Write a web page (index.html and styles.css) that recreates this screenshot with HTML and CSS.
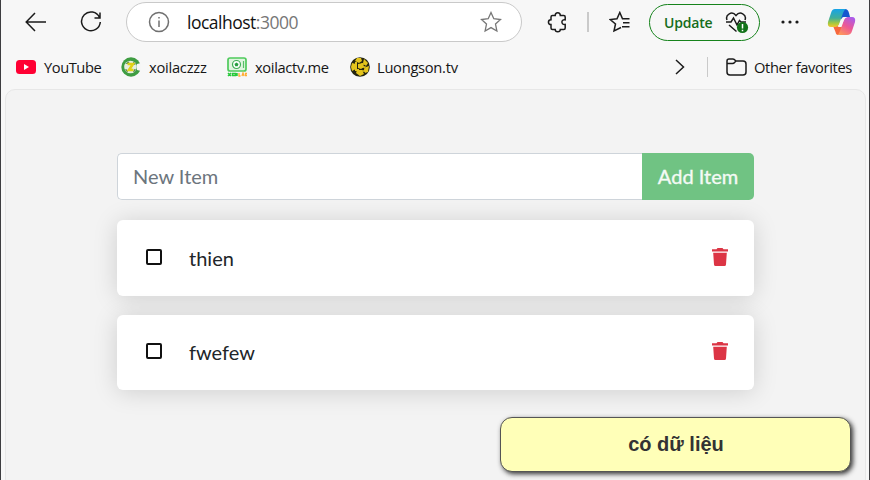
FILE: index.html
```html
<!DOCTYPE html>
<html lang="vi">
<head>
<meta charset="utf-8">
<title>Todo</title>
<link rel="stylesheet" href="styles.css">
</head>
<body>
<div class="window">
  <header class="toolbar">
    <svg class="back" width="22" height="20" viewBox="0 0 22 20"><path d="M10 1 1.200 10 10 19M1.500 10H21"/></svg>
    <svg class="reload" width="22" height="22" viewBox="0 0 22 22"><path d="M19.500 6.500A9.400 9.400 0 1 0 20.300 11M20 1.500V7H14.500"/></svg>
    <div class="address">
      <svg class="info" width="22" height="22" viewBox="0 0 22 22"><circle cx="11" cy="11" r="9.500"/><path d="M11 9.500V16M11 6V7.600"/></svg>
      <span class="url">localhost<span class="port">:3000</span></span>
      <svg class="star" width="22" height="22" viewBox="0 0 22 22"><path d="m11 1.500 2.800 6.200 6.700.8-5 4.600 1.400 6.900-5.900-3.400L5.100 20l1.400-6.900-5-4.600 6.700-.8Z"/></svg>
    </div>
    <svg class="puzzle" width="22" height="22" viewBox="0 0 22 22"><path d="M5.500 4.500H8.200C8.200.800 13.300.800 13.300 4.500H16.700Q18.200 4.500 18.200 6V8.800C13.800 8 13.800 14.200 18.200 13.500V17Q18.200 18.500 16.700 18.500H13.300C13.300 21.500 8.200 21.500 8.200 18.500H5.500Q4 18.500 4 17V13.500C.600 13.500.600 8.800 4 8.800V6Q4 4.500 5.500 4.500Z"/></svg>
    <i class="rule"></i>
    <svg class="favs" width="22" height="22" viewBox="0 0 22 22"><path d="M12 16.500 5 20 6.500 13 1.200 8.500 8 7.700 10.800 1.500 13.500 7.700H20.500M14 11.800H20.500M13 15.800H20.500"/></svg>
    <div class="update"><span>Update</span>
      <svg width="24" height="23" viewBox="0 0 24 23"><path d="M2 8C0 2.500 7-1.500 11 3.500 15-1.500 22 2.500 20 8M1 10H6L8.500 6 12 13 14.500 8.500 16 10H21M4 13 11.500 19.500"/><circle cx="17.500" cy="15.500" r="5.600"/><path class="mark" d="M17.500 12V16.500M17.500 17.800V19.200"/></svg>
    </div>
    <svg class="dots" width="18" height="6" viewBox="0 0 18 6"><circle cx="2" cy="3" r="1.600"/><circle cx="9" cy="3" r="1.600"/><circle cx="16" cy="3" r="1.600"/></svg>
    <svg class="copilot" width="29" height="28" viewBox="0 0 29 28">
      <defs>
        <linearGradient id="a" x1="0" y1="0" x2="0" y2="1"><stop offset="0" stop-color="#16a3e8"/><stop offset=".5" stop-color="#3fae9b"/><stop offset=".8" stop-color="#a9c93b"/><stop offset="1" stop-color="#f5c52f"/></linearGradient>
        <linearGradient id="b" x1=".8" y1="0" x2=".2" y2="1"><stop offset="0" stop-color="#a95cec"/><stop offset=".5" stop-color="#ed5795"/><stop offset="1" stop-color="#ff9a59"/></linearGradient>
      </defs>
      <path fill="#1457cf" d="M13 1H18Q21 1 22 5L23 9H18Q15 9 14 12Z"/>
      <path fill="#f7683d" d="M6 18H13L16 15 14 24Q13 27 11 27 9 27 8.500 24Z"/>
      <path fill="url(#a)" d="M8 1H19Q17 2 16 5L12.500 15Q11.500 19 8 19H4Q0 19 1 14L4 5Q5 1 8 1Z"/>
      <path fill="url(#b)" d="M21 9H25Q29 9 28 14L25 23Q24 27 20 27H10Q12 26 13 23L16.500 13Q17.500 9 21 9Z"/>
      <path fill="#f7f7f7" d="M17 9H20Q17.500 10 16.500 13L14.500 19H10.500Q12 18 13 15L14.500 11Q15.300 9 17 9Z"/>
    </svg>
  </header>
  <nav class="bookmarks">
    <svg class="b1" width="20" height="14" viewBox="0 0 20 14"><rect width="20" height="14" rx="3.500" fill="#ff0033"/><path fill="#fff" d="m8 4 5 3-5 3Z"/></svg>
    <span class="t1">YouTube</span>
    <svg class="b2" width="20" height="20" viewBox="0 0 20 20"><circle cx="10" cy="10" r="9.700" fill="#3f9d42"/><path fill="#f6f6f6" d="m16 7 4-1v8l-4-1Z"/><circle cx="9.500" cy="10" r="6.300" fill="#e7eee1"/><path fill="#5b8a55" d="m4.500 7 2.500-2.500 1.500.5-1.500 2Zm8-2.500 2.500 2.500-1.500 1-1.500-2ZM4 12l2 .5 1 2-1 1Zm9.500 0 1.500.5-2 3-1-1Z"/><path stroke="#e0d218" stroke-width="2.600" fill="none" d="M6.500 7H12L8 13H12.500"/></svg>
    <span class="t2">xoilaczzz</span>
    <svg class="b3" width="20" height="20" viewBox="0 0 20 20"><rect x="1" y="1" width="18" height="13" rx="2" fill="#dff5df" stroke="#4fca5c" stroke-width="1.700"/><circle cx="9.500" cy="7.500" r="4" fill="#fff" stroke="#3fae54" stroke-width="1.200"/><path fill="#259d3f" d="m9.500 5.500 2 1.500-.8 2.300H8.300L7.500 7Z"/><path d="M16.500 4V11" stroke="#59bd6a" stroke-width="1.200"/><path d="m1 16 3 3m0-3-3 3M5.500 16.500h3v2h-3ZM10 16v3" stroke="#27c93b" stroke-width="1.500" fill="none"/><path d="M12 16v3h1.500M15 19l1-3 1 3M20 16.500h-1.500v2H20" stroke="#ffad32" stroke-width="1.300" fill="none"/></svg>
    <span class="t3">xoilactv.me</span>
    <svg class="b4" width="20" height="20" viewBox="0 0 20 20"><circle cx="10" cy="10" r="9.800" fill="#252510"/><path fill="#e5c51d" d="m7 1 4 0 1 3-3 2-4-2ZM2 6l4 1 0 5-4 2-1-4ZM8 7l5-1 1 4-3 2-3-1ZM14 2l4 4-2 3-3-3ZM16 10l3-1-1 6-3 1-1-3ZM7 13l5 0 2 4-4 2-4-3Z"/><path d="M6 5v8h3" stroke="#e5c51d" fill="none" stroke-width="2"/><path d="M16 7h-4v3h3v4h-4" stroke="#e5c51d" fill="none" stroke-width="1.500"/></svg>
    <span class="t4">Luongson.tv</span>
    <svg class="chev" width="10" height="16" viewBox="0 0 10 16"><path d="m1 1 7.500 7L1 15"/></svg>
    <i class="rule"></i>
    <svg class="folder" width="21" height="18" viewBox="0 0 21 18"><path d="M1 5V3Q1 1 3 1H7Q8 1 10 3H17Q20 3 20 6V14Q20 17 17 17H4Q1 17 1 14ZM1 5.500H6.500Q8 5.500 10 3"/></svg>
    <span class="t5">Other favorites</span>
  </nav>
  <main class="page">
    <form class="add"><input type="text" placeholder="New Item"><button type="button">Add Item</button></form>
    <div class="item"><span class="box"></span><span class="name">thien</span><svg class="trash" width="16" height="18" viewBox="0 0 16 18"><path d="M0 1.200H4.500L5.500 0H10.500L11.500 1.200H16V3.400H0ZM1.200 4.800H14.800L14 16.500Q13.900 18 12.500 18H3.500Q2.100 18 2 16.500Z"/></svg></div>
    <div class="item second"><span class="box"></span><span class="name">fwefew</span><svg class="trash" width="16" height="18" viewBox="0 0 16 18"><path d="M0 1.200H4.500L5.500 0H10.500L11.500 1.200H16V3.400H0ZM1.200 4.800H14.800L14 16.500Q13.900 18 12.500 18H3.500Q2.100 18 2 16.500Z"/></svg></div>
  </main>
</div>
<div class="note">có dữ liệu</div>
</body>
</html>
```
FILE: styles.css
```css
* { box-sizing: border-box; }
body { margin: 0; width: 870px; height: 480px; overflow: hidden; background: #3d3d40; font-family: "Open Sans", sans-serif; }
.window { width: 868px; height: 480px; margin-left: 1px; background: #f7f7f7; overflow: hidden; }
svg { display: block; flex: none; fill: none; stroke: #1b1b1b; stroke-width: 1.5; }
span { white-space: nowrap; }
.toolbar { display: flex; align-items: center; height: 44px; }
.back { margin-left: 24px; }
.reload { margin-left: 33px; }
.address { display: flex; align-items: center; width: 396px; height: 40px; margin-left: 24px; border: 1px solid #c9c9c9; border-radius: 20px; background: #fff; flex: none; }
.info { margin-left: 21px; stroke: #707070; }
.url { margin: -1px 0 0 17px; width: 115px; font-size: 17.5px; letter-spacing: -.5px; color: #111; }
.port { color: #777; }
.star { margin-left: 178px; stroke: #777; stroke-width: 1.3; }
.puzzle { margin-left: 25px; }
.rule { width: 1px; height: 20px; background: #cacaca; flex: none; }
.toolbar .rule { width: 2px; margin-left: 18px; }
.favs { margin-left: 20px; }
.update { display: flex; align-items: center; width: 111px; height: 37px; margin-left: 18px; border: 1.5px solid #16831c; border-radius: 19px; color: #156d1a; font-size: 14px; font-weight: 600; flex: none; }
.update span { width: 49px; margin-left: 14px; letter-spacing: -.2px; }
.update svg { margin-left: 12px; margin-top: 2px; }
.update circle { fill: #127219; stroke: none; }
.update .mark { stroke: #fff; }
.dots { margin-left: 21px; }
.dots circle { fill: #1b1b1b; stroke: none; }
.copilot { margin-left: 28px; stroke: none; }
.bookmarks { display: flex; align-items: center; height: 46px; padding-left: 15px; font-size: 14.7px; color: #161616; }
.bookmarks span { flex: none; }
.b1, .b2, .b3, .b4 { stroke: none; }
.t1 { width: 60px; margin-left: 8px; letter-spacing: -.45px; }
.b2 { margin-left: 17px; }
.t2 { width: 60px; margin-left: 8px; letter-spacing: -.25px; }
.b3 { margin-left: 18px; }
.t3 { width: 76px; margin-left: 8px; letter-spacing: -.35px; }
.b4 { margin-left: 19px; }
.t4 { width: 83px; margin-left: 7px; letter-spacing: -.28px; }
.chev { margin-left: 215px; }
.bookmarks .rule { margin-left: 22px; }
.folder { margin-left: 18px; }
.t5 { margin-left: 7px; letter-spacing: -.35px; }
.page { width: 861px; height: 400px; margin-left: 4px; margin-top: -1px; padding: 63px 111px 0; border: 1px solid #e7e7e7; border-radius: 10px; background: #f3f3f3; font-family: Lato, sans-serif; font-size: 20px; color: #212529; }
.add { display: flex; width: 637px; height: 47px; margin: 0; }
.add input { width: 525px; padding: 0 15px 2px; border: 1px solid #ced4da; border-right: 0; border-radius: 5px 0 0 5px; background: #fff; font: 20px Lato, sans-serif; outline: 0; }
.add input::placeholder { color: #6c757d; opacity: 1; }
.add button { width: 112px; padding: 0 0 2px; border: 0; border-radius: 0 5px 5px 0; background: #70c383; color: #f4faf5; font: 20px Lato, sans-serif; -webkit-text-stroke: .35px #f4faf5; }
.item { display: flex; align-items: center; width: 637px; height: 76px; margin-top: 20px; border-radius: 6px; background: #fff; box-shadow: 0 2px 25px rgba(0,0,0,.15); }
.second { height: 75px; margin-top: 19px; }
.box { width: 16px; height: 16px; margin: -2px 0 0 29px; border: 2px solid #111; border-radius: 2px; }
.name { margin: -1px 0 0 27px; }
.trash { margin: -2px 26px 0 auto; fill: #dc3545; stroke: none; }
.second .box, .second .trash { margin-top: -3px; }
.note { position: absolute; left: 500px; top: 417px; display: grid; place-items: center; width: 351px; height: 55px; padding-left: 1px; border: 1px solid #555; border-radius: 12px; background: #ffffb8; box-shadow: 2px 2px 5px #333; color: #333; font: bold 20px "Liberation Sans", sans-serif; }
```
